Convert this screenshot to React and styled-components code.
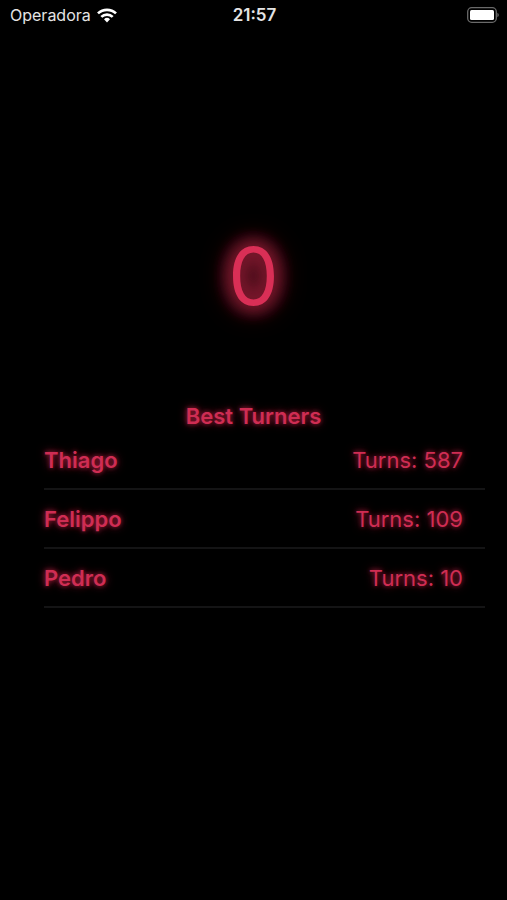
import styled, { createGlobalStyle } from 'styled-components';

const GlobalStyle = createGlobalStyle`
  body {
    margin: 0;
    background: #000;
    font-family: Inter, "Liberation Sans", sans-serif;
  }
`;

const Screen = styled.div`
  min-height: 100vh;
  background: #000;
  color: #cf2d53;
`;

const StatusBar = styled.header`
  display: grid;
  grid-template-columns: 1fr auto 1fr;
  align-items: center;
  height: 30px;
  padding: 0 8px 0 10px;
  color: #e4e4e4;
  font-size: 16px;
`;

const Carrier = styled.div`
  display: flex;
  align-items: center;
  gap: 6px;
`;

const Clock = styled.time`
  font-size: 17px;
  font-weight: 600;
`;

const BatteryIcon = styled.svg`
  justify-self: end;
`;

const Counter = styled.div`
  margin-top: 196px;
  color: #d92f56;
  font-size: 80px;
  line-height: 100px;
  text-align: center;
  /* neon glow, stacked so it fills the inside of the digit */
  text-shadow: 0 0 16px #8c1d34, 0 0 20px #8c1d34, 0 0 20px #8c1d34,
    0 0 24px #8c1d34, 0 0 32px #7a152c;
`;

const Ranking = styled.section`
  margin-top: 75px;
  font-size: 22px;
  line-height: 30px;
  text-shadow: 0 0 4px #8c1832, 0 0 8px #8c1832;
`;

const Title = styled.h2`
  margin: 0;
  font-size: inherit;
  font-weight: 600;
  text-align: center;
`;

const List = styled.ol`
  margin: 0;
  padding: 0 22px 0 44px;
  list-style: none;
`;

const Row = styled.li`
  display: flex;
  justify-content: space-between;
  padding: 14px 22px 13px 0;
  border-bottom: 2px solid #141415;
`;

const Name = styled.span`
  font-weight: 600;
`;

const turners = [
  { name: 'Thiago', turns: 587 },
  { name: 'Felippo', turns: 109 },
  { name: 'Pedro', turns: 10 },
];

const App = () => {
  return (
    <Screen>
      <GlobalStyle />
      <StatusBar>
        <Carrier>
          Operadora
          <svg width="20" height="15" viewBox="0 0 20 15" fill="none" stroke="#fff" strokeWidth="2.7" aria-hidden="true">
            <path d="M1 5.4a13 13 0 0 1 18 0" />
            <path d="M4.3 8.9a8.2 8.2 0 0 1 11.4 0" />
            <path d="M7 11.3a4.3 4.3 0 0 1 6 0L10 14.5z" fill="#fff" stroke="none" />
          </svg>
        </Carrier>
        <Clock>21:57</Clock>
        <BatteryIcon width="32" height="16" viewBox="0 0 32 16" aria-hidden="true">
          <rect x="0.7" y="0.7" width="28.6" height="14.6" rx="4" fill="none" stroke="#6a6a6a" strokeWidth="1.3" />
          <rect x="3" y="3" width="24" height="10" rx="1.5" fill="#fff" />
          <path d="M30.4 5.7a2.6 2.6 0 0 1 0 4.6z" fill="#6a6a6a" />
        </BatteryIcon>
      </StatusBar>
      <main>
        <Counter>0</Counter>
        <Ranking>
          <Title>Best Turners</Title>
          <List>
            {turners.map(({ name, turns }) => (
              <Row key={name}>
                <Name>{name}</Name>
                <span>Turns: {turns}</span>
              </Row>
            ))}
          </List>
        </Ranking>
      </main>
    </Screen>
  );
};

export default App;
